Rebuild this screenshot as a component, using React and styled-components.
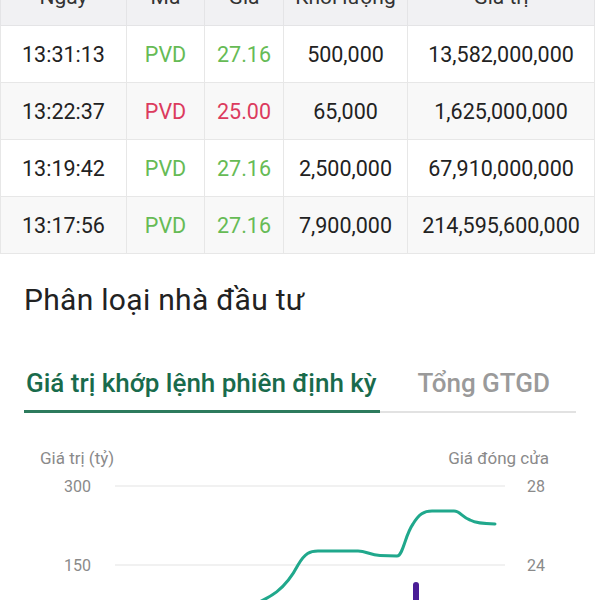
import styled, { createGlobalStyle } from "styled-components";

const GlobalStyle = createGlobalStyle`
  html, body {
    margin: 0;
    padding: 0;
    background: #ffffff;
    overflow: hidden;
  }
  body {
    font-family: Roboto, "Noto Sans", "Liberation Sans", sans-serif;
    color: #222;
  }
`;

const trades = [
  { time: "13:31:13", code: "PVD", price: "27.16", up: true, volume: "500,000", value: "13,582,000,000" },
  { time: "13:22:37", code: "PVD", price: "25.00", up: false, volume: "65,000", value: "1,625,000,000" },
  { time: "13:19:42", code: "PVD", price: "27.16", up: true, volume: "2,500,000", value: "67,910,000,000" },
  { time: "13:17:56", code: "PVD", price: "27.16", up: true, volume: "7,900,000", value: "214,595,600,000" },
];

const App = () => {
  return (
    <Page>
      <GlobalStyle />
      <TableScroll>
        <Table>
          <colgroup>
            <col style={{ width: 126 }} />
            <col style={{ width: 78 }} />
            <col style={{ width: 79 }} />
            <col style={{ width: 124 }} />
            <col style={{ width: 187 }} />
          </colgroup>
          <thead>
            <tr>
              <Th>Ngày</Th>
              <Th>Mã</Th>
              <Th>Giá</Th>
              <Th>Khối lượng</Th>
              <Th>Giá trị</Th>
            </tr>
          </thead>
          <tbody>
            {trades.map((t, i) => (
              <Row key={t.time} $striped={i % 2 === 1}>
                <Td>{t.time}</Td>
                <Td $tone={t.up ? "up" : "down"}>{t.code}</Td>
                <Td $tone={t.up ? "up" : "down"}>{t.price}</Td>
                <Td>{t.volume}</Td>
                <Td>{t.value}</Td>
              </Row>
            ))}
          </tbody>
        </Table>
      </TableScroll>

      <Section>
        <SectionTitle>Phân loại nhà đầu tư</SectionTitle>
        <TabList>
          <Tab $active>Giá trị khớp lệnh phiên định kỳ</Tab>
          <Tab>Tổng GTGD</Tab>
        </TabList>

        <ChartBox>
          <AxisTitles>
            <AxisTitle>Giá trị (tỷ)</AxisTitle>
            <AxisTitle>Giá đóng cửa</AxisTitle>
          </AxisTitles>
          <Plot viewBox="24 468 552 132" width="552" height="132">
            <g fill="#8a8a8a" fontSize="16" fontFamily="Roboto, sans-serif">
              <text x="91" y="492" textAnchor="end">300</text>
              <text x="91" y="571" textAnchor="end">150</text>
              <text x="527" y="492">28</text>
              <text x="527" y="571">24</text>
            </g>
            <g stroke="#ececec" strokeWidth="1.5">
              <line x1="115" y1="486" x2="505" y2="486" />
              <line x1="115" y1="565" x2="505" y2="565" />
            </g>
            <rect x="413" y="582" width="6" height="30" rx="3" fill="#4a1d96" />
            <path
              d="M250 606 C270 598 285 590 298 565 C305 553 310 551 318 551 L358 551 C366 551 370 555 380 555.5 L397 556 C403 556 405 535 413 524 C419 514 424 511 432 511 L454 511 C460 511 462 517 470 520 C476 523 482 523.5 495 524"
              fill="none"
              stroke="#20a88c"
              strokeWidth="3"
              strokeLinecap="round"
              strokeLinejoin="round"
            />
          </Plot>
        </ChartBox>
      </Section>
    </Page>
  );
};

export default App;

const Page = styled.div`
  width: 600px;
  height: 600px;
  overflow: hidden;
  background: #fff;
`;

const TableScroll = styled.div`
  margin-top: -32px;
`;

const Table = styled.table`
  width: 594px;
  border-collapse: collapse;
  table-layout: fixed;
`;

const Th = styled.th`
  height: 56px;
  padding: 0;
  background: #f1f1f3;
  border: 1px solid #e4e4e6;
  font-size: 21px;
  font-weight: 400;
  color: #333;
  text-align: center;
`;

const Row = styled.tr`
  background: ${(p) => (p.$striped ? "#f8f8f8" : "#ffffff")};
`;

const toneColor = {
  up: "#66bb55",
  down: "#dc3b5e",
};

const Td = styled.td`
  height: 56px;
  padding: 0;
  border: 1px solid #e7e7e7;
  font-size: 21.5px;
  text-align: center;
  white-space: nowrap;
  color: ${(p) => (p.$tone ? toneColor[p.$tone] : "#222")};
`;

const Section = styled.section`
  padding: 0 24px;
`;

const SectionTitle = styled.h2`
  margin: 28px 0 0;
  font-size: 30px;
  line-height: 36px;
  font-weight: 400;
  letter-spacing: 0.3px;
  color: #222;
`;

const TabList = styled.div`
  display: flex;
  gap: 36px;
  margin-top: 49px;
  border-bottom: 2px solid #e2e2e2;
`;

const Tab = styled.div`
  padding: 0 3px 11px 2px;
  margin-bottom: -2px;
  font-size: 26px;
  line-height: 32px;
  font-weight: 500;
  color: ${(p) => (p.$active ? "#196b4c" : "#9a9a9a")};
  border-bottom: 3px solid ${(p) => (p.$active ? "#2d7b5d" : "transparent")};
`;

const ChartBox = styled.div`
  margin-top: 35px;
`;

const AxisTitles = styled.div`
  display: flex;
  justify-content: space-between;
  padding: 0 27px 0 16px;
`;

const AxisTitle = styled.span`
  font-size: 17px;
  line-height: 20px;
  color: #8a8a8a;
`;

const Plot = styled.svg`
  display: block;
`;
